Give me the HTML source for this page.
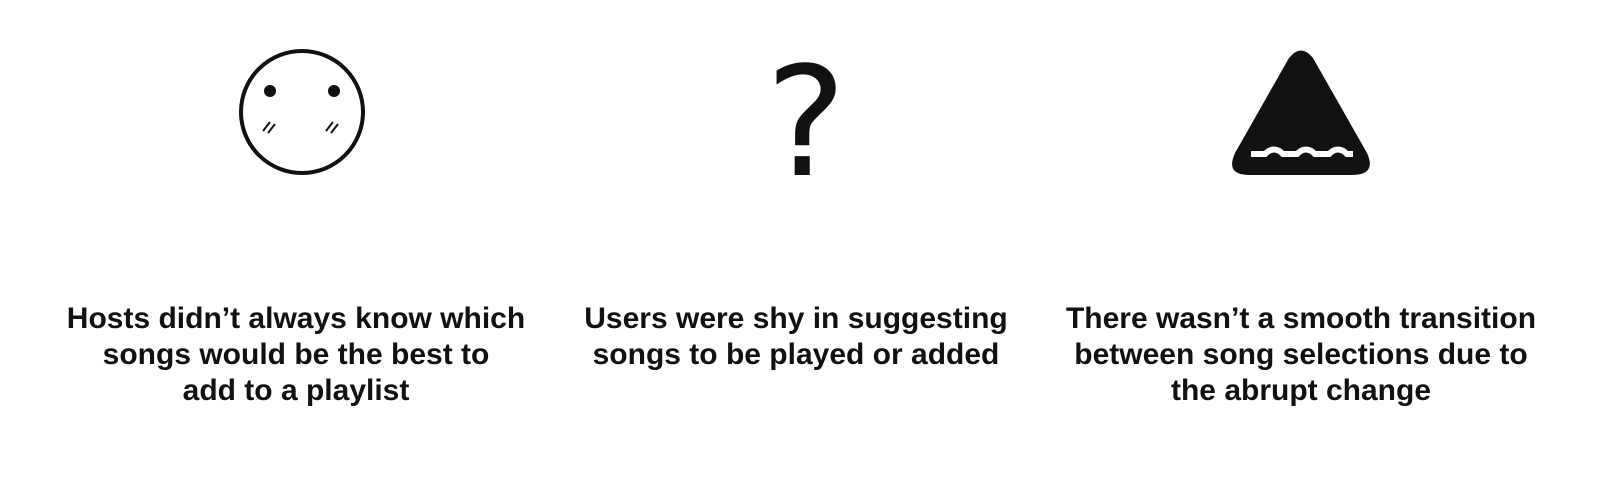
<!DOCTYPE html>
<html><head><style>
body{margin:0;width:1600px;height:480px;background:#fff;position:relative;font-family:"Liberation Sans",Arial,sans-serif;overflow:hidden}
.t{position:absolute;top:301px;width:560px;text-align:center;font-weight:bold;font-size:30px;line-height:36px;color:#111}
.q{position:absolute;left:716px;width:180px;text-align:center;top:46px;font-family:"DejaVu Sans",sans-serif;font-size:152px;line-height:154px;color:#111}
</style></head><body>
<svg width="1600" height="480" style="position:absolute;left:0;top:0">
<circle cx="302" cy="112" r="61" fill="none" stroke="#111" stroke-width="4"/>
<circle cx="270" cy="91" r="6" fill="#111"/>
<circle cx="334" cy="91" r="6" fill="#111"/>
<g stroke="#111" stroke-width="2">
<line x1="263" y1="131" x2="270" y2="122"/><line x1="268" y1="133" x2="275" y2="124"/>
<line x1="326" y1="131" x2="333" y2="122"/><line x1="331" y1="133" x2="338" y2="124"/>
</g>
<g transform="translate(27,3)">
<path d="M1262 55 Q1274 40 1286 55 L1340 150 Q1350 172 1325 172 L1222 172 Q1198 172 1208 150 Z" fill="#111"/>
<path d="M1224 151 L1238 151 Q1247 142 1256 151 L1270 151 Q1279 142 1288 151 L1302 151 Q1311 142 1320 151 L1326 151" fill="none" stroke="#fff" stroke-width="6"/>
</g>
</svg>
<div class="q">?</div>
<div class="t" style="left:16px">Hosts didn’t always know which<br>songs would be the best to<br>add to a playlist</div>
<div class="t" style="left:516px">Users were shy in suggesting<br>songs to be played or added</div>
<div class="t" style="left:1021px">There wasn’t a smooth transition<br>between song selections due to<br>the abrupt change</div>
</body></html>
